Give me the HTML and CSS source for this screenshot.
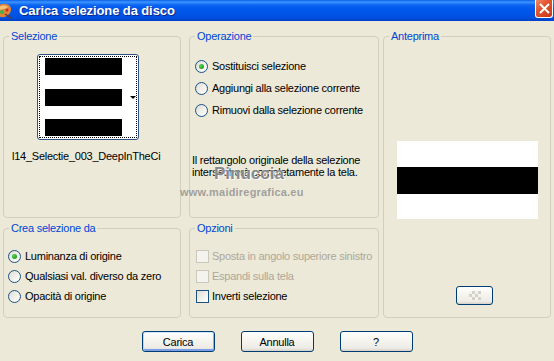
FILE: index.html
```html
<!DOCTYPE html>
<html lang="it">
<head>
    <meta charset="UTF-8">
    <title>Carica selezione da disco</title>
    <link rel="stylesheet" href="styles.css">
</head>
<body>
    <div class="window">
        <div class="titlebar">
            <svg class="app-icon" width="16" height="16" viewBox="0 0 16 16">
                <path d="M1 3 C4 0 10 0 13 3 C15 6 14 10 11 12 C8 15 3 15 1 12 Z" fill="#e0833a"/>
                <path d="M2 4 C5 2 9 2 11 4 C9 6 6 6 2 7 Z" fill="#f4c27a"/>
                <circle cx="5" cy="9" r="2" fill="#3bb34a"/>
                <circle cx="10" cy="7" r="1.5" fill="#c8321e"/>
                <path d="M8 11 L14 15" stroke="#6b3a16" stroke-width="1.5"/>
            </svg>
            <span class="title">Carica selezione da disco</span>
            <div class="close-btn">
                <svg width="11" height="11" viewBox="0 0 11 11">
                    <path d="M1 1 L10 10 M10 1 L1 10" stroke="#fff" stroke-width="2"/>
                </svg>
            </div>
        </div>

        <div class="dialog">
            <div class="panels">
                <fieldset class="group group-selection">
                    <legend>Selezione</legend>
                    <div class="thumb">
                        <div class="thumb-focus">
                            <div class="thumb-image">
                                <span class="bar"></span>
                                <span class="bar"></span>
                                <span class="bar"></span>
                            </div>
                            <span class="thumb-arrow"></span>
                        </div>
                    </div>
                    <div class="file-name">l14_Selectie_003_DeepInTheCi</div>
                </fieldset>

                <fieldset class="group group-operation">
                    <legend>Operazione</legend>
                    <div class="option-list wide">
                        <div class="option"><span class="radio checked"></span>Sostituisci selezione</div>
                        <div class="option"><span class="radio"></span>Aggiungi alla selezione corrente</div>
                        <div class="option"><span class="radio"></span>Rimuovi dalla selezione corrente</div>
                    </div>
                    <p class="note">Il rettangolo originale della selezione<br>intersecherà completamente la tela.</p>
                </fieldset>

                <fieldset class="group group-preview">
                    <legend>Anteprima</legend>
                    <div class="preview">
                        <span class="preview-band"></span>
                    </div>
                    <div class="xp-button small-button">
                        <svg width="12" height="9" viewBox="0 0 12 9">
                            <rect x="0" y="0" width="12" height="9" fill="#f4f3ee"/>
                            <rect x="3" y="0" width="3" height="3" fill="#d4d2c8"/>
                            <rect x="9" y="0" width="3" height="3" fill="#d4d2c8"/>
                            <rect x="0" y="3" width="3" height="3" fill="#d4d2c8"/>
                            <rect x="6" y="3" width="3" height="3" fill="#d4d2c8"/>
                            <rect x="3" y="6" width="3" height="3" fill="#d4d2c8"/>
                            <rect x="9" y="6" width="3" height="3" fill="#d4d2c8"/>
                        </svg>
                    </div>
                </fieldset>

                <fieldset class="group group-source">
                    <legend>Crea selezione da</legend>
                    <div class="option-list">
                        <div class="option"><span class="radio checked"></span>Luminanza di origine</div>
                        <div class="option"><span class="radio"></span>Qualsiasi val. diverso da zero</div>
                        <div class="option"><span class="radio"></span>Opacità di origine</div>
                    </div>
                </fieldset>

                <fieldset class="group group-options">
                    <legend>Opzioni</legend>
                    <div class="option-list">
                        <div class="option disabled"><span class="checkbox"></span>Sposta in angolo superiore sinistro</div>
                        <div class="option disabled"><span class="checkbox"></span>Espandi sulla tela</div>
                        <div class="option"><span class="checkbox"></span>Inverti selezione</div>
                    </div>
                </fieldset>
            </div>

            <div class="buttons">
                <div class="xp-button default">Carica</div>
                <div class="xp-button">Annulla</div>
                <div class="xp-button">?</div>
            </div>
        </div>

        <!-- watermark over the dialog -->
        <div class="watermark" aria-hidden="true">
            <span class="wm-name">Pinuccia</span>
            <span class="wm-site">www.maidiregrafica.eu</span>
        </div>
    </div>
</body>
</html>
```

FILE: styles.css
```css
/* Common styles */
body {
    margin: 0;
    font-family: 'Liberation Sans', Arial, sans-serif;
    font-size: 11px;
    letter-spacing: -0.25px;
    color: #000;
}

.window {
    position: relative;
    width: 554px;
    height: 361px;
    overflow: hidden;
    background-color: #ece9d8;
}

/* Title bar */
.titlebar {
    height: 21px;
    display: flex;
    align-items: flex-start;
    background: linear-gradient(#0a5fe8 0, #3d95ff 2px, #0c64f0 5px, #0058ee 9px, #0055e6 60%, #0050de 85%, #003fc8 100%);
}

.app-icon {
    margin: 3px 0 0 -3px;
    flex: 0 0 auto;
}

.title {
    margin: 3px 0 0 6px;
    color: #fff;
    font-size: 13px;
    font-weight: bold;
    letter-spacing: -0.1px;
    line-height: 15px;
    text-shadow: 1px 1px 0 #0b2a8a;
    flex: 1;
}

.close-btn {
    width: 18px;
    height: 18px;
    margin-right: 1px;
    box-sizing: border-box;
    border: 1px solid #fff;
    border-top: none;
    border-radius: 0 0 3px 3px;
    background: linear-gradient(135deg, #f08a6a 0, #e2532f 40%, #c83a16 100%);
    display: flex;
    justify-content: center;
    align-items: center;
}

/* Dialog body */
.dialog {
    padding: 9px 0 0 3px;
}

.panels {
    display: grid;
    grid-template-columns: 182px 190px 168px;
    grid-template-rows: 188px 96px;
    column-gap: 4px;
    row-gap: 4px;
}

.group {
    margin: 0;
    padding: 0;
    min-width: 0;
    border: 1px solid #d0d0bf;
    border-radius: 4px;
}

.group legend {
    margin-left: 5px;
    padding: 0 2px;
    color: #0046d5;
    line-height: 13px;
}

.group-selection,
.group-source {
    margin-right: 4px;
}

.group-preview {
    grid-column: 3;
    grid-row: 1 / span 2;
}

.group-source {
    grid-column: 1;
    grid-row: 2;
}

.group-options {
    grid-column: 2;
    grid-row: 2;
}

/* Selection thumbnail */
.thumb {
    width: 102px;
    height: 86px;
    box-sizing: border-box;
    margin: 11px 0 0 33px;
    padding: 1px;
    border: 1px solid #2d4f82;
    border-radius: 3px;
    background-color: #fff;
}

.thumb-focus {
    height: 100%;
    box-sizing: border-box;
    border: 1px dotted #000;
    display: flex;
    align-items: center;
    gap: 8px;
    padding: 1px 0 1px 5px;
}

.thumb-image {
    width: 78px;
    height: 78px;
    display: flex;
    flex-direction: column;
    justify-content: space-between;
}

.thumb-image .bar {
    height: 17px;
    background-color: #000;
}

.thumb-arrow {
    width: 0;
    height: 0;
    border-left: 3px solid transparent;
    border-right: 3px solid transparent;
    border-top: 3px solid #000;
    margin-top: 1px;
}

.file-name {
    margin: 10px 0 0 8px;
    line-height: 13px;
}

/* Radio and check lists */
.option-list {
    margin-top: 11px;
    padding-left: 4px;
}

.option-list.wide {
    margin-top: 12px;
    padding-left: 5px;
}

.option-list.wide .option {
    height: 22px;
}

.group-options .option-list {
    padding-left: 6px;
}

.option {
    height: 20px;
    display: flex;
    align-items: center;
    gap: 4px;
    white-space: nowrap;
}

.option.disabled {
    color: #aca899;
}

.radio {
    width: 13px;
    height: 13px;
    box-sizing: border-box;
    border: 1px solid #1c5180;
    border-radius: 50%;
    background: linear-gradient(135deg, #dcdcd7 0, #f2f1ec 55%, #fff 100%);
    display: flex;
    justify-content: center;
    align-items: center;
    flex: 0 0 auto;
}

.radio.checked::after {
    content: '';
    width: 5px;
    height: 5px;
    border-radius: 50%;
    background: radial-gradient(circle at 35% 35%, #55d451 0, #21a121 70%);
}

.checkbox {
    width: 13px;
    height: 13px;
    box-sizing: border-box;
    border: 1px solid #1c5180;
    background: linear-gradient(135deg, #dcdcd7 0, #f2f1ec 55%, #fff 100%);
    flex: 0 0 auto;
    margin-right: -1px;
}

.option.disabled .checkbox {
    border-color: #cac8bb;
    background: #f4f3ee;
}

.note {
    margin: 33px 0 0 2px;
    line-height: 12px;
}

/* Preview */
.preview {
    width: 141px;
    height: 78px;
    margin: 98px auto 0;
    padding-top: 26px;
    box-sizing: border-box;
    background-color: #fff;
}

.preview-band {
    display: block;
    height: 27px;
    background-color: #000;
}

/* XP buttons */
.xp-button {
    width: 73px;
    height: 21px;
    box-sizing: border-box;
    border: 1px solid #003c74;
    border-radius: 3px;
    background: linear-gradient(#ffffff 0, #f6f5f0 40%, #ecebe6 85%, #d6d0c5 100%);
    display: flex;
    justify-content: center;
    align-items: center;
}

.xp-button.default {
    box-shadow: inset 0 1px 0 #cee7ff, inset 1px 0 0 #b8d4f8, inset -1px 0 0 #8fb2ec, inset 0 -2px 0 #7c9ee6;
}

.small-button {
    width: 37px;
    height: 19px;
    margin: 67px 0 0 72px;
}

.buttons {
    display: flex;
    justify-content: center;
    gap: 26px;
    margin: 13px 0 0 -3px;
}

/* Watermark */
.watermark {
    position: absolute;
    left: 180px;
    top: 164px;
    display: flex;
    flex-direction: column;
    align-items: flex-start;
    pointer-events: none;
}

.wm-name {
    margin-left: 34px;
    font-size: 17px;
    font-weight: bold;
    letter-spacing: 0;
    line-height: 20px;
    color: rgba(115, 115, 120, 0.85);
    text-shadow: 0 0 1px #fff, 1px 1px 1px rgba(255, 255, 255, 0.9);
}

.wm-site {
    margin-top: 2px;
    font-size: 11px;
    font-weight: bold;
    letter-spacing: 0.2px;
    line-height: 13px;
    color: rgba(140, 140, 140, 0.8);
}
```
